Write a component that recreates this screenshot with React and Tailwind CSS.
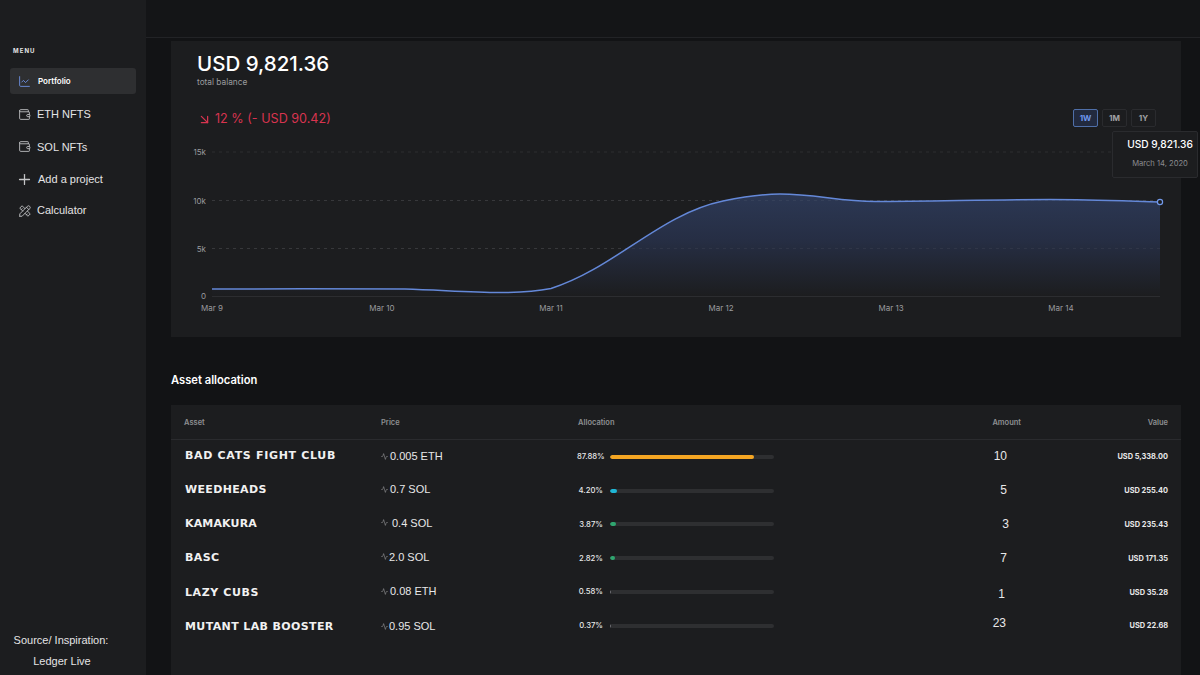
import { Activity, ArrowDownRight, ChartLine, Plus, Wallet } from "lucide-react";
import { TbTools } from "react-icons/tb";

const menu = [
  { label: "ETH NFTS", icon: Wallet, size: 13, strokeWidth: 1.6, rowClass: "h-[33px] pl-[8px] gap-[6px]" },
  { label: "SOL NFTs", icon: Wallet, size: 13, strokeWidth: 1.6, rowClass: "h-[32.5px] pl-[8px] gap-[6px]" },
  { label: "Add a project", icon: Plus, size: 17, strokeWidth: 1.8, rowClass: "h-[32.5px] pl-[6px] gap-[5px]" },
  { label: "Calculator", icon: TbTools, size: 14, strokeWidth: 1.5, rowClass: "h-[30px] pl-[8px] gap-[5px]" },
];

const ranges = ["1W", "1M", "1Y"];

const yTicks = [
  { label: "15k", y: 152 },
  { label: "10k", y: 200.5 },
  { label: "5k", y: 248.5 },
];

const xTicks = [
  { label: "Mar 9", x: 212 },
  { label: "Mar 10", x: 382 },
  { label: "Mar 11", x: 551 },
  { label: "Mar 12", x: 721 },
  { label: "Mar 13", x: 891 },
  { label: "Mar 14", x: 1061 },
];

const line =
  "M212 289 C270 289 350 288.5 405 289 C440 290 470 292.5 500 292.5 C520 292.5 538 291 551 288.5 C615 268 660 214 723 201 C745 196.5 760 194 780 194 C815 194 840 201.5 875 201.5 C930 201.5 990 199.5 1050 199.5 C1090 199.5 1125 201 1160 202";

const assets = [
  { name: "Bad Cats Fight Club", price: "0.005 ETH", alloc: 87.88, pct: "87.88%", color: "bg-[#f5a623]", amount: "10", value: "USD 5,338.00", nameClass: "pb-[2px] tracking-[0.68px]", priceClass: "gap-[2px] pb-[1px]", amountClass: "pr-[14px] pb-[1px]" },
  { name: "Weedheads", price: "0.7 SOL", alloc: 4.2, pct: "4.20%", color: "bg-[#1fb6d5]", amount: "5", value: "USD 255.40", nameClass: "tracking-[0.35px]", priceClass: "gap-[2px] pb-[3px]", amountClass: "pr-[14px] pb-[1px]" },
  { name: "Kamakura", price: "0.4 SOL", alloc: 3.87, pct: "3.87%", color: "bg-[#2fa56f]", amount: "3", value: "USD 235.43", nameClass: "tracking-[0.15px]", priceClass: "gap-[4px] pb-[3px]", amountClass: "pr-[12px] pb-[1px]" },
  { name: "BASC", price: "2.0 SOL", alloc: 2.82, pct: "2.82%", color: "bg-[#2fa56f]", amount: "7", value: "USD 171.35", nameClass: "tracking-[0.4px]", priceClass: "gap-[1px] pb-[3px]", amountClass: "pr-[14px] pb-[1px]" },
  { name: "Lazy Cubs", price: "0.08 ETH", alloc: 0.58, pct: "0.58%", color: "bg-[#6f7074]", amount: "1", value: "USD 35.28", nameClass: "pt-[3px] tracking-[0.6px]", priceClass: "gap-[2px] pb-[2px]", amountClass: "pr-[16px] pt-[4px]" },
  { name: "Mutant Lab Booster", price: "0.95 SOL", alloc: 0.37, pct: "0.37%", color: "bg-[#6f7074]", amount: "23", value: "USD 22.68", nameClass: "pt-[3px] tracking-[0.38px]", priceClass: "gap-[1px] pt-[1px]", amountClass: "pr-[15px] pb-[6px]" },
];

function Sidebar() {
  return (
    <aside className="w-[146px] shrink-0 bg-[#1c1d1f] flex flex-col pt-[47px] font-['Liberation_Sans',sans-serif] text-[#e4e4e5]">
      <p className="pl-[13px] text-[6px] leading-[8px] font-bold tracking-[1.1px] font-['Inter',sans-serif]">MENU</p>

      <nav className="mt-[13px] px-[10px]">
        {/* Active item */}
        <div className="h-[26px] rounded-[3px] bg-[#2e2f31] flex items-center pl-[8px] gap-[7px]">
          <ChartLine size={13} strokeWidth={1.6} className="text-[#6f94ea]" />
          <span className="text-[8px] font-semibold text-white font-['Inter',sans-serif]">Portfolio</span>
        </div>

        <div className="mt-[3.5px]">
          {menu.map((item) => (
            <div key={item.label} className={`${item.rowClass} flex items-center`}>
              <item.icon size={item.size} strokeWidth={item.strokeWidth} className="shrink-0 text-[#c4c5c7]" />
              <span className="text-[11px]">{item.label}</span>
            </div>
          ))}
        </div>
      </nav>

      <div className="mt-auto pb-[7px] pr-[24px] flex flex-col items-center gap-[7px] text-[11px] leading-[14px]">
        <p>Source/ Inspiration:</p>
        <p className="pl-[2px]">Ledger Live</p>
      </div>
    </aside>
  );
}

function BalanceChart() {
  return (
    <svg width="1010" height="180" className="block">
      <defs>
        <linearGradient id="area" x1="0" y1="0" x2="0" y2="1">
          <stop offset="0%" stopColor="#2c3854" />
          <stop offset="45%" stopColor="#262e44" />
          <stop offset="100%" stopColor="#1c1d1f" />
        </linearGradient>
      </defs>
      <g transform="translate(-171 -140)" fontFamily="Inter, sans-serif" fontSize="8" fill="#9a9b9e">
        {yTicks.map((t) => (
          <g key={t.label}>
            <line x1="212" x2="1160" y1={t.y} y2={t.y} stroke="#2d2e31" strokeWidth="1" strokeDasharray="3 4" />
            <text x="206" y={t.y + 3} textAnchor="end">{t.label}</text>
          </g>
        ))}
        <text x="206" y="299" textAnchor="end">0</text>
        <path d={`${line} L1160 296 L212 296 Z`} fill="url(#area)" />
        {yTicks.slice(1).map((t) => (
          <line key={t.label} x1="212" x2="1160" y1={t.y} y2={t.y} stroke="#ffffff" strokeOpacity="0.05" strokeDasharray="3 4" />
        ))}
        <line x1="212" x2="1160" y1="296.5" y2="296.5" stroke="#2c2d30" />
        <path d={line} fill="none" stroke="#6488d8" strokeWidth="1.5" />
        <circle cx="1160" cy="202" r="2.6" fill="#1c1d1f" stroke="#7299ea" strokeWidth="1.2" />
        {xTicks.map((t) => (
          <text key={t.label} x={t.x} y="311" textAnchor="middle">{t.label}</text>
        ))}
      </g>
    </svg>
  );
}

function AssetRow({ asset }) {
  return (
    <div className="grid grid-cols-[197px_197px_283px_160px_147px] h-[33.8px] items-center text-[#e8e8e9]">
      <div className={`pl-px text-[11px] font-bold uppercase text-[#f1f1f1] font-['DejaVu_Sans',sans-serif] ${asset.nameClass}`}>
        {asset.name}
      </div>
      <div className={`flex items-center text-[11px] font-['Liberation_Sans',sans-serif] ${asset.priceClass}`}>
        <Activity size={7} strokeWidth={1.5} className="text-[#b9babc]" />
        <span>{asset.price}</span>
      </div>
      <div className="flex items-center -ml-[1px]">
        <span className="w-[26px] text-right text-[7.7px] font-medium font-['Inter',sans-serif]">{asset.pct}</span>
        <div className="ml-[7px] h-[4px] w-[164px] rounded-full bg-[#2e2f31] overflow-hidden">
          <div className={`h-full rounded-full ${asset.color}`} style={{ width: `${asset.alloc}%` }} />
        </div>
      </div>
      <div className={`text-right text-[12px] font-['Liberation_Sans',sans-serif] ${asset.amountClass}`}>{asset.amount}</div>
      <div className="text-right text-[7.4px] font-bold font-['Inter',sans-serif]">{asset.value}</div>
    </div>
  );
}

export default function App() {
  return (
    <div className="h-[675px] w-[1200px] overflow-hidden flex bg-[#121315] font-['Inter',sans-serif]">
      <Sidebar />

      <main className="flex-1 min-w-0 flex flex-col">
        <header className="h-[38px] shrink-0 bg-[#141517] border-b border-[#222326]" />

        <div className="flex-1 min-h-0 flex flex-col pt-[3px] pl-[25px] pr-[19px]">
          {/* Balance card */}
          <section className="relative bg-[#1c1d1f]">
            <div className="pl-[26px] pt-[10px]">
              <h1 className="text-[20.5px] leading-[25px] font-medium text-white">USD 9,821.36</h1>
              <p className="text-[8.3px] leading-[12px] text-[#9a9b9e]">total balance</p>
            </div>

            <div className="mt-[21px] pl-[26px] pr-[25px] flex items-center justify-between h-[18px]">
              <div className="flex items-center gap-[3px] pt-[2px] text-[12.6px] text-[#d8344f]">
                <ArrowDownRight size={15} strokeWidth={2} />
                <span>12 % (- USD 90.42)</span>
              </div>
              <div className="flex gap-[4px]">
                {ranges.map((r) =>
                  r === "1W" ? (
                    <button key={r} className="w-[25px] h-[18px] rounded-[2px] border border-[#4f6fa8] bg-[#222a3e] text-[8px] font-bold text-[#6f97ee]">
                      {r}
                    </button>
                  ) : (
                    <button key={r} className="w-[25px] h-[18px] rounded-[2px] border border-[#2a2b2e] text-[8px] font-bold text-[#a2a3a6]">
                      {r}
                    </button>
                  )
                )}
              </div>
            </div>

            <div className="mt-[13px] pb-[17px]">
              <BalanceChart />
            </div>

            {/* Tooltip over the chart */}
            <div className="absolute left-[941px] top-[90px] w-[86px] h-[47px] bg-[#1c1d1f] border border-[#2a2b2e] rounded-[2px] flex flex-col items-center pt-[5px] gap-[7px] pl-[10px]">
              <span className="text-[10.2px] leading-[14px] font-medium text-white whitespace-nowrap">USD 9,821.36</span>
              <span className="text-[7.6px] leading-[12px] text-[#8b8c8f] whitespace-nowrap">March 14, 2020</span>
            </div>
          </section>

          <h2 className="mt-[35px] mb-[17px] text-[11.2px] leading-[16px] font-semibold text-white">Asset allocation</h2>

          {/* Table card */}
          <section className="flex-1 bg-[#1c1d1f]">
            <div className="h-[35px] px-[13px] pt-[1px] grid grid-cols-[197px_197px_283px_160px_147px] items-center border-b border-[#2a2b2e] text-[7.5px] font-semibold text-[#8e8f92]">
              <span>Asset</span>
              <span>Price</span>
              <span>Allocation</span>
              <span className="text-right">Amount</span>
              <span className="text-right">Value</span>
            </div>
            <div className="px-[13px]">
              {assets.map((asset) => (
                <AssetRow key={asset.name} asset={asset} />
              ))}
            </div>
          </section>
        </div>
      </main>
    </div>
  );
}
